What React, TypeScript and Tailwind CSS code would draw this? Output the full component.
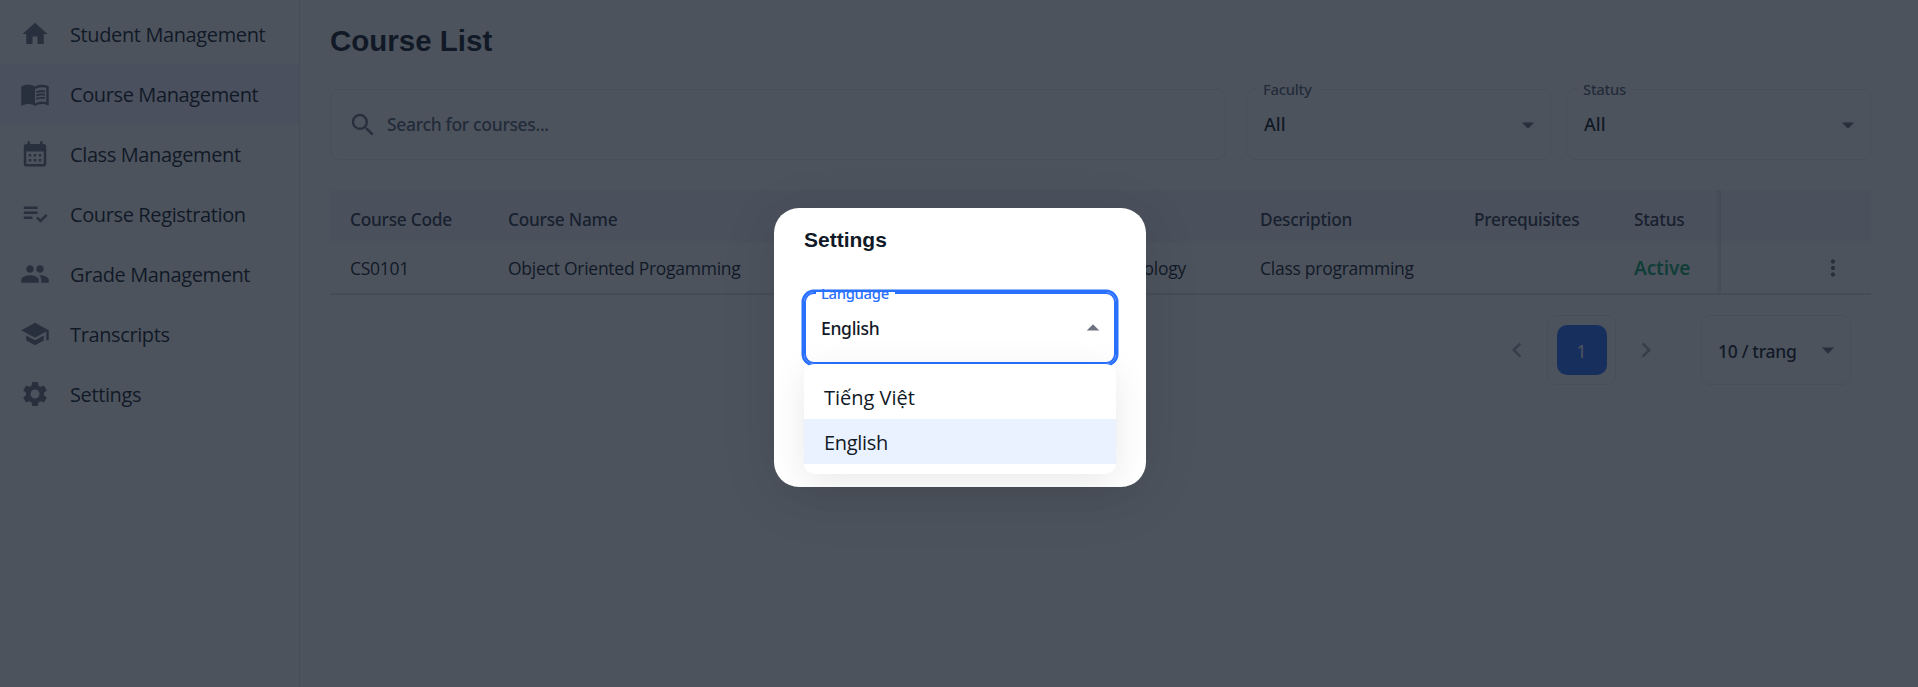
import type { ReactNode } from "react";
import type { IconType } from "react-icons";
import {
  MdArrowDropDown,
  MdArrowDropUp,
  MdCalendarMonth,
  MdChevronLeft,
  MdChevronRight,
  MdHome,
  MdMenuBook,
  MdMoreVert,
  MdPeople,
  MdPlaylistAddCheck,
  MdSchool,
  MdSearch,
  MdSettings,
} from "react-icons/md";

const navItems: { label: string; icon: IconType; active?: boolean }[] = [
  { label: "Student Management", icon: MdHome },
  { label: "Course Management", icon: MdMenuBook, active: true },
  { label: "Class Management", icon: MdCalendarMonth },
  { label: "Course Registration", icon: MdPlaylistAddCheck },
  { label: "Grade Management", icon: MdPeople },
  { label: "Transcripts", icon: MdSchool },
  { label: "Settings", icon: MdSettings },
];

const columns = [
  "Course Code",
  "Course Name",
  "Credits",
  "Faculty",
  "Description",
  "Prerequisites",
  "Status",
];

const gridCols =
  "grid grid-cols-[158px_272.5px_1fr_258px_214px_160px_107px_150px]";

function Sidebar() {
  return (
    <nav className="w-[300px] shrink-0 border-r border-[#e5e7eb] pt-1">
      {navItems.map(({ label, icon: Icon, active }) => (
        <div
          key={label}
          className={`flex h-[60px] items-center gap-5 pl-5 ${active ? "bg-[#f1f3fd]" : ""}`}
        >
          <Icon className="size-[30px] shrink-0 text-[#6c737f]" />
          <span className="pt-[2px] text-[20px] tracking-[-0.38px] text-[#111927]">{label}</span>
        </div>
      ))}
    </nav>
  );
}

function Select({ label, value }: { label: string; value: string }) {
  return (
    <div className="relative flex h-[71px] w-[305px] items-center justify-between rounded-[10px] border border-[#e8eaee] pl-[17px] pr-[7px]">
      <span className="absolute -top-[12px] left-[10px] bg-white px-[6px] font-['Noto_Sans'] text-[14.8px] font-medium leading-[22px] tracking-[-0.25px] text-[#566070]">
        {label}
      </span>
      <span className="font-['Noto_Sans'] text-[18px] font-medium text-[#111927]">{value}</span>
      <MdArrowDropDown className="size-[30px] text-[#6c737f]" />
    </div>
  );
}

function Cell({ children }: { children?: ReactNode }) {
  return <div className="whitespace-nowrap pl-5">{children}</div>;
}

function CourseTable() {
  return (
    <div className="relative mt-[30px] border-b-2 border-[#e1e3e8]">
      <div className={`${gridCols} h-[53px] items-center bg-[#f4f4fb] pt-[7px] font-['Noto_Sans'] text-[17.3px] font-medium tracking-[-0.25px] text-[#2f3746]`}>
        {columns.map((c) => (
          <Cell key={c}>{c}</Cell>
        ))}
      </div>
      <div className={`${gridCols} h-[50px] items-center text-[17.5px] tracking-[-0.26px] text-[#111927]`}>
        <Cell>CS0101</Cell>
        <Cell>Object Oriented Progamming</Cell>
        <Cell>4</Cell>
        <div className="pr-[54px] text-right">Information Technology</div>
        <Cell>Class programming</Cell>
        <Cell />
        <Cell>
          <span className="font-['Noto_Sans'] text-[19px] font-semibold tracking-[-0.1px] text-[#10a86c]">
            Active
          </span>
        </Cell>
        <div className="flex justify-end pr-[25px]">
          <MdMoreVert className="size-[26px] text-[#6c737f]" />
        </div>
      </div>
      <div className="absolute inset-y-0 right-[150px] w-[6px] bg-linear-to-r from-transparent to-black/10" />
    </div>
  );
}

function Pagination() {
  return (
    <div className="mt-5 flex items-center justify-end pr-5 font-['Noto_Sans'] text-[#6c737f]">
      <MdChevronLeft className="size-[30px] opacity-60" />
      <div className="ml-[15px] flex h-[70px] w-[69px] items-center justify-center rounded-[10px] border border-[#e8eaee]">
        <div className="flex size-[50px] items-center justify-center rounded-[10px] bg-[#2970ff] pt-[2px] text-[17.5px] text-white">
          1
        </div>
      </div>
      <MdChevronRight className="ml-[15px] size-[30px] opacity-60" />
      <div className="ml-[40px] flex h-[70px] w-[150px] items-center justify-between rounded-[10px] border border-[#e8eaee] pl-[16px] pr-[7px]">
        <span className="pt-[2px] text-[17.5px] font-medium tracking-[-0.3px] text-[#111927]">10 / trang</span>
        <MdArrowDropDown className="size-[30px]" />
      </div>
    </div>
  );
}

function SettingsDialog() {
  return (
    <div className="absolute inset-0 flex items-start justify-center bg-[#111927]/75 pl-[2px] pt-[208px]">
      <div className="h-[279px] w-[372px] rounded-[25px] bg-white px-[30px] pt-[17px] shadow-[0_10px_60px_rgba(0,0,0,0.09)]">
        <h2 className="font-['Liberation_Sans'] text-[21px] font-bold leading-[30px] text-[#111927]">
          Settings
        </h2>
        <div className="relative mt-[37px] flex h-[72px] items-center justify-between rounded-[10px] border-2 border-[#2970ff] pl-[15px] pr-[6px] shadow-[0_0_0_2.5px_#2970ff]">
          <span className="absolute -top-[2px] left-[10px] h-[2px] w-[79px] bg-white" />
          <span className="absolute -top-[12px] left-[15px] font-['Noto_Sans'] text-[14.8px] font-medium leading-[22px] tracking-[-0.3px] text-[#2970ff]">
            Language
          </span>
          <span className="font-['Noto_Sans'] text-[17.5px] font-medium tracking-[-0.3px] text-[#111927]">
            English
          </span>
          <MdArrowDropUp className="size-[30px] text-[#6c737f]" />
        </div>
        <ul className="relative h-[110px] rounded-[10px] bg-white py-[10px] text-[20px] leading-[47px] text-[#111927] shadow-[0_8px_36px_rgba(0,0,0,0.09)]">
          <li className="h-[45px] pl-5">Tiếng Việt</li>
          <li className="h-[45px] bg-[#ebf2ff] pl-5 tracking-[-0.3px]">English</li>
        </ul>
      </div>
    </div>
  );
}

export default function App() {
  return (
    <div className="relative flex h-[687px] overflow-hidden bg-white font-['Open_Sans','Noto_Sans',sans-serif]">
      <Sidebar />
      <main className="flex-1 pl-[30px] pr-[47px]">
        <h1 className="mt-[23px] font-['Liberation_Sans'] text-[29.5px] font-bold leading-[36px] text-[#111927]">
          Course List
        </h1>
        <div className="mt-[30px] flex">
          <div className="mr-5 flex h-[71px] flex-1 items-center gap-[9px] rounded-[10px] border border-[#e8eaee] pl-[17px]">
            <MdSearch className="size-[30px] text-[#6c737f]" />
            <span className="font-['Noto_Sans'] text-[17.5px] font-medium tracking-[-0.33px] text-[#566070]">
              Search for courses...
            </span>
          </div>
          <div className="flex gap-[15px]">
            <Select label="Faculty" value="All" />
            <Select label="Status" value="All" />
          </div>
        </div>
        <CourseTable />
        <Pagination />
      </main>
      <SettingsDialog />
    </div>
  );
}
